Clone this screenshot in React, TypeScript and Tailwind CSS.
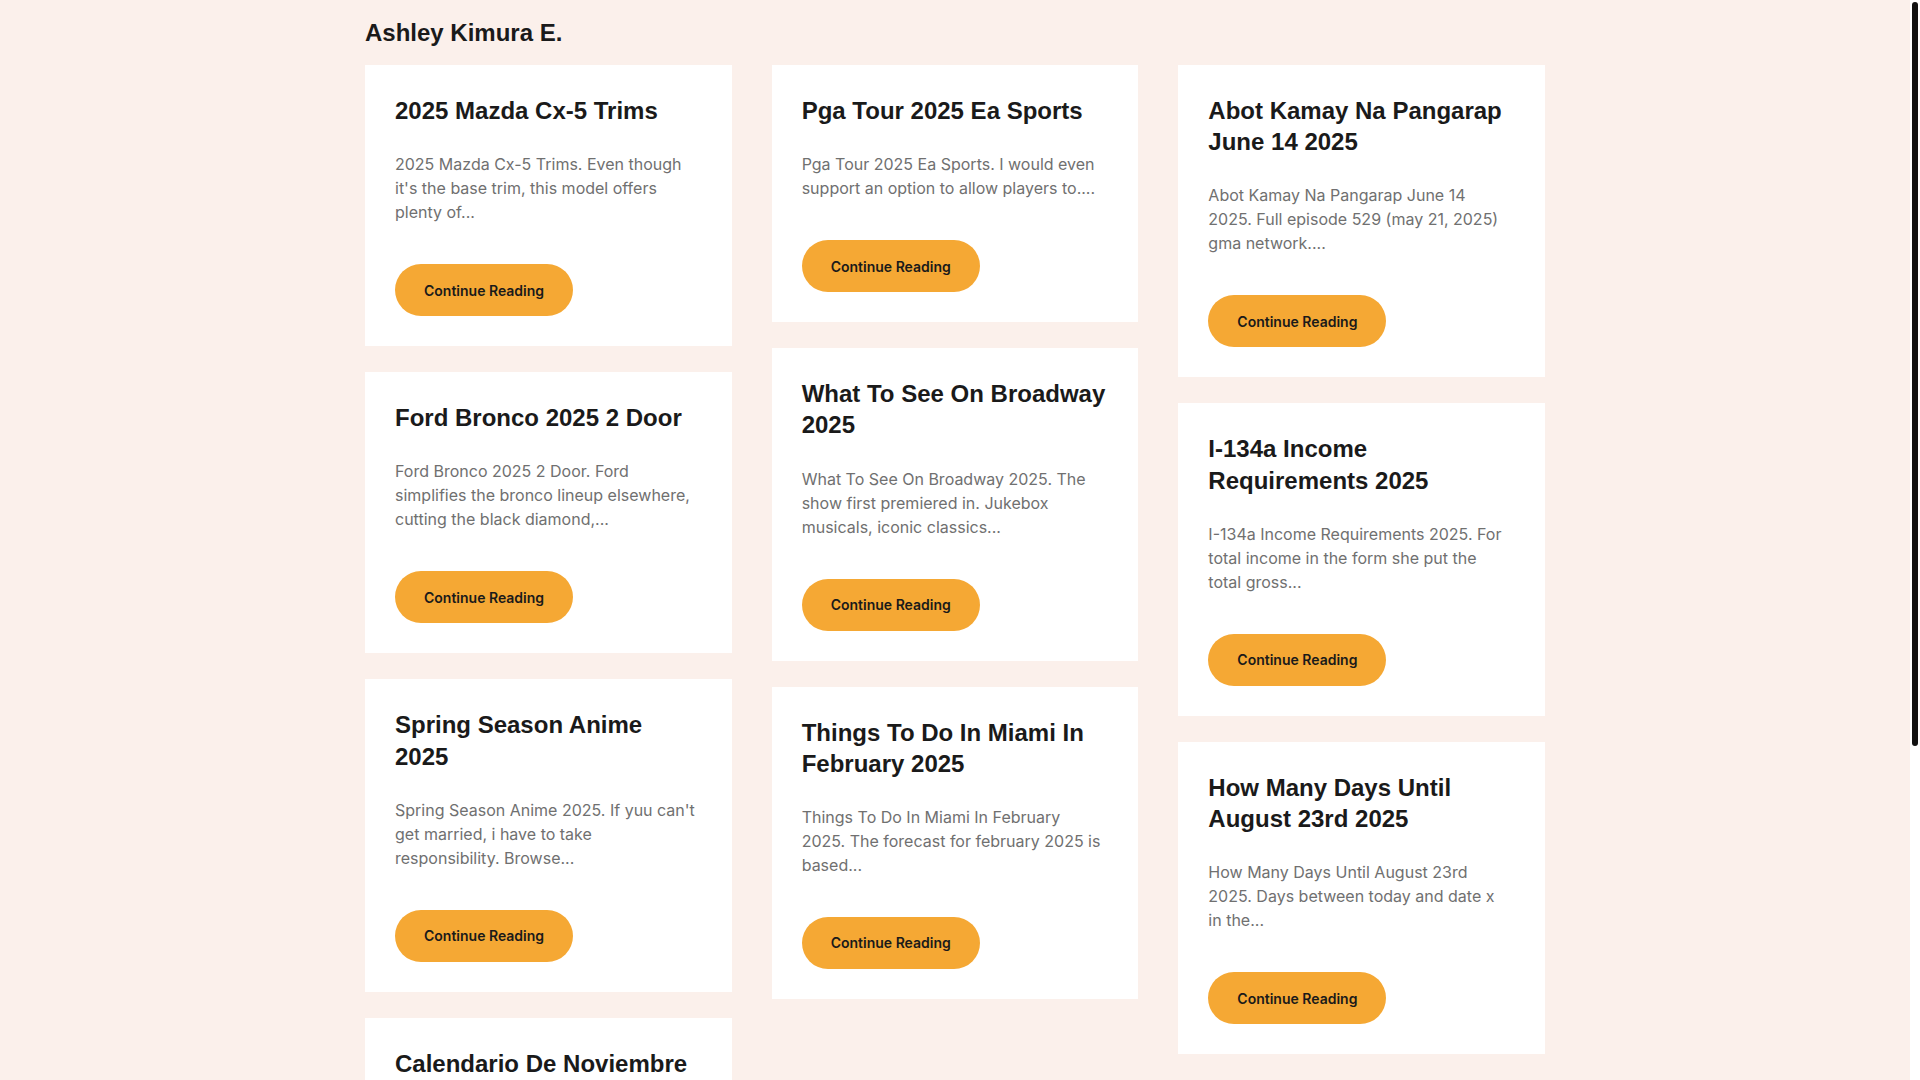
import React from "react";

interface Post {
  title: string;
  excerpt: string;
}

const columns: Post[][] = [
  [
    {
      title: "2025 Mazda Cx-5 Trims",
      excerpt: "2025 Mazda Cx-5 Trims. Even though it's the base trim, this model offers plenty of...",
    },
    {
      title: "Ford Bronco 2025 2 Door",
      excerpt: "Ford Bronco 2025 2 Door. Ford simplifies the bronco lineup elsewhere, cutting the black diamond,...",
    },
    {
      title: "Spring Season Anime 2025",
      excerpt: "Spring Season Anime 2025. If yuu can't get married, i have to take responsibility. Browse...",
    },
    {
      title: "Calendario De Noviembre 2025",
      excerpt: "Calendario De Noviembre 2025. Descarga el calendario de noviembre con los días festivos y...",
    },
  ],
  [
    {
      title: "Pga Tour 2025 Ea Sports",
      excerpt: "Pga Tour 2025 Ea Sports. I would even support an option to allow players to....",
    },
    {
      title: "What To See On Broadway 2025",
      excerpt: "What To See On Broadway 2025. The show first premiered in. Jukebox musicals, iconic classics...",
    },
    {
      title: "Things To Do In Miami In February 2025",
      excerpt: "Things To Do In Miami In February 2025. The forecast for february 2025 is based...",
    },
  ],
  [
    {
      title: "Abot Kamay Na Pangarap June 14 2025",
      excerpt: "Abot Kamay Na Pangarap June 14 2025. Full episode 529 (may 21, 2025) gma network....",
    },
    {
      title: "I-134a Income Requirements 2025",
      excerpt: "I-134a Income Requirements 2025. For total income in the form she put the total gross...",
    },
    {
      title: "How Many Days Until August 23rd 2025",
      excerpt: "How Many Days Until August 23rd 2025. Days between today and date x in the...",
    },
  ],
];

const PostCard: React.FC<{ post: Post }> = ({ post }) => {
  return (
    <article className="bg-white p-[30px]">
      <h2 className="mb-[26px] font-['Liberation_Sans',Arial,sans-serif] text-[24px] font-bold leading-[1.3] text-[#1a1a1a]">
        {post.title}
      </h2>
      <p className="pr-[5px] font-['Inter',sans-serif] text-[16px] leading-6 text-[#707070]">
        {post.excerpt}
      </p>
      <a
        href="#"
        className="mt-10 inline-flex h-[52px] items-center rounded-full bg-[#f5a834] px-[29px] font-['Inter',sans-serif] text-[14px] font-semibold text-[#1a1a1a]"
      >
        Continue Reading
      </a>
    </article>
  );
};

const App: React.FC = () => {
  return (
    <div className="flex h-screen bg-[#fbf0eb]">
      <div className="flex-1 overflow-y-auto">
        <div className="mx-auto w-[1180px]">
          {/* Site title */}
          <header className="pt-[17px] pb-[17px]">
            <h1 className="font-['Liberation_Sans',Arial,sans-serif] text-[24px] font-bold leading-[31px] text-[#1a1a1a]">
              Ashley Kimura E.
            </h1>
          </header>

          {/* Posts */}
          <main className="flex items-start gap-10">
            {columns.map((col, i) => (
              <div key={i} className="flex flex-1 flex-col gap-[26px]">
                {col.map((post) => (
                  <PostCard key={post.title} post={post} />
                ))}
              </div>
            ))}
          </main>

          {/* Footer */}
          <footer className="mt-[26px] py-[90px] text-center font-['Inter',sans-serif] text-sm text-[#707070]">
            © 2025 Ashley Kimura E. All rights reserved.
          </footer>
        </div>
      </div>

      {/* Scrollbar */}
      <div className="w-[10px] bg-white pt-[2px] pl-[2px]">
        <div className="h-[744px] w-[6px] rounded-full bg-[#111111]" />
      </div>
    </div>
  );
};

export default App;
